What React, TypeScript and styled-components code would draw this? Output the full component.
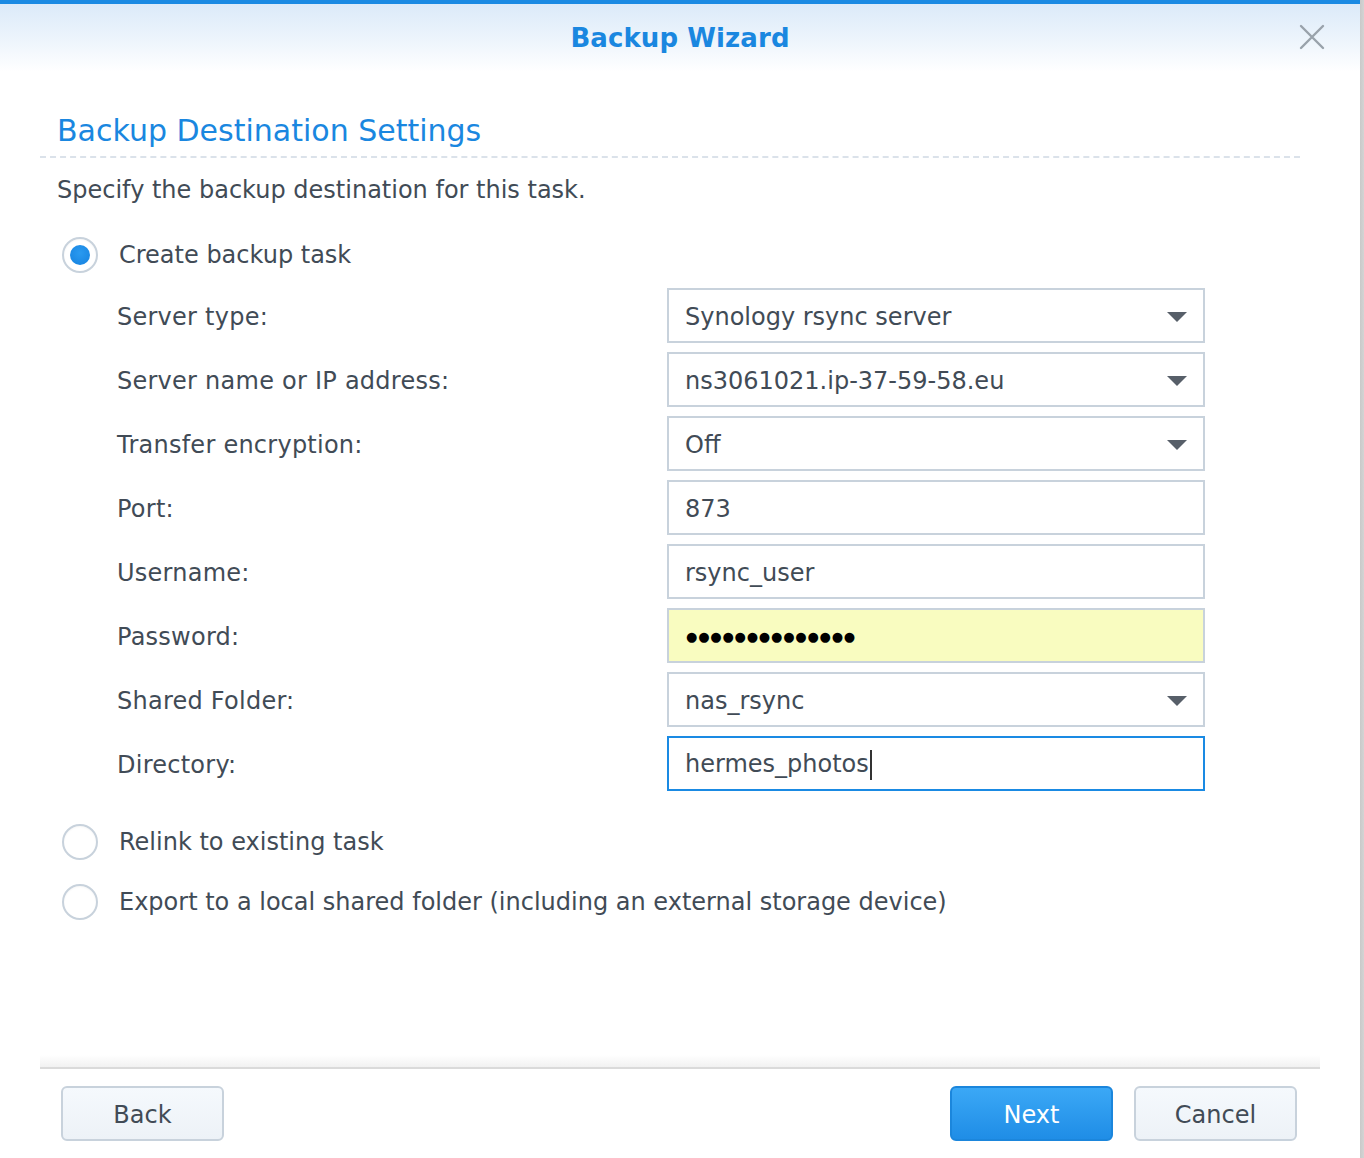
import React from "react";
import styled, { createGlobalStyle } from "styled-components";

const Global = createGlobalStyle`
  html, body { margin: 0; padding: 0; }
  body { background: #cfd0d2; font-family: "DejaVu Sans", Verdana, sans-serif; }
  * { box-sizing: border-box; }
`;

const Page = styled.div`
  display: flex;
  width: 1364px;
  height: 1158px;
  overflow: hidden;
`;

const Dialog = styled.div`
  width: 1360px;
  height: 1158px;
  background: #ffffff;
  display: flex;
  flex-direction: column;
`;

const EdgeStrip = styled.div`
  width: 4px;
  background: linear-gradient(to right, #c9c9c9, #d4d4d4);
`;

const Header = styled.header`
  border-top: 4px solid #1a8ae3;
  height: 72px;
  background: linear-gradient(to bottom, #dbeaf9 0%, #eef5fc 55%, #ffffff 100%);
  display: grid;
  grid-template-columns: 1fr auto 1fr;
  align-items: center;
`;

const HeaderTitle = styled.h1`
  grid-column: 2;
  margin: 0;
  font-size: 26px;
  font-weight: bold;
  color: #1a87e0;
  letter-spacing: 0.1px;
  padping-top: 0;
`;

const CloseButton = styled.button`
  grid-column: 3;
  justify-self: end;
  margin-right: 34px;
  margin-top: -2px;
  width: 28px;
  height: 28px;
  padding: 0;
  border: none;
  background: transparent;
  display: flex;
  align-items: center;
  justify-content: center;
`;

const Body = styled.main`
  flex: 1;
  padding: 0 60px 0 40px;
  display: flex;
  flex-direction: column;
`;

const SectionTitle = styled.h2`
  margin: 39px 0 0;
  padding: 2px 0 7px 17px;
  font-size: 30px;
  font-weight: normal;
  color: #1a87e0;
  border-bottom: 2px dashed #dbe2ea;
  line-height: 36px;
`;

const Description = styled.p`
  margin: 16px 0 0 17px;
  font-size: 24px;
  line-height: 32px;
  color: #414b56;
`;

const RadioRow = styled.label<{ $top: number }>`
  display: flex;
  align-items: center;
  gap: 21px;
  margin: ${(p) => p.$top}px 0 0 22px;
  font-size: 24px;
  line-height: 36px;
  color: #414b56;
`;

const RadioCircle = styled.span<{ $checked?: boolean }>`
  width: 36px;
  height: 36px;
  border-radius: 50%;
  border: 2px solid #c8d2dc;
  background: #ffffff;
  display: flex;
  align-items: center;
  justify-content: center;
  box-shadow: inset 0 1px 2px rgba(0, 0, 0, 0.04);
  &::after {
    content: "";
    display: ${(p) => (p.$checked ? "block" : "none")};
    width: 20px;
    height: 20px;
    border-radius: 50%;
    background: radial-gradient(circle at 50% 40%, #2a9af0, #1581df);
  }
`;

const Form = styled.div`
  margin: 15px 0 0 77px;
  display: flex;
  flex-direction: column;
  gap: 9px;
`;

const FormRow = styled.div`
  display: grid;
  grid-template-columns: 550px 538px;
  align-items: center;
`;

const Label = styled.span`
  font-size: 24px;
  color: #414b56;
  letter-spacing: 0.25px;
  padding-top: 3px;
`;

const Field = styled.div<{ $focused?: boolean; $filled?: boolean }>`
  height: 55px;
  border: 2px solid ${(p) => (p.$focused ? "#1a8ae3" : "#c8d2dc")};
  background: ${(p) => (p.$filled ? "#f9fcc0" : "#ffffff")};
  display: flex;
  align-items: center;
  padding: 2px 16px 0 16px;
  font-size: 24px;
  color: #414b56;
`;

const FieldText = styled.span`
  flex: 1;
  white-space: nowrap;
`;

const Caret = styled.span`
  display: inline-block;
  width: 2px;
  height: 30px;
  background: #333;
  vertical-align: middle;
  margin-left: 1px;
`;

const Dots = styled.span`
  flex: 1;
  font-size: 13px;
  letter-spacing: 0.8px;
  color: #000000;
  padding-left: 1px;
`;

const Footer = styled.footer`
  padding: 0 40px;
  display: flex;
  flex-direction: column;
`;

const FooterRule = styled.div`
  height: 14px;
  background: linear-gradient(to bottom, #ffffff, #f1f1f1);
  border-bottom: 2px solid #dadada;
`;

const ButtonBar = styled.div`
  display: flex;
  align-items: center;
  padding: 17px 23px 17px 21px;
  gap: 21px;
`;

const Spacer = styled.div`
  flex: 1;
`;

const Button = styled.button<{ $primary?: boolean }>`
  width: 163px;
  height: 55px;
  border-radius: 6px;
  font-family: "DejaVu Sans", Verdana, sans-serif;
  font-size: 24px;
  padding: 2px 0 0;
  border: 2px solid ${(p) => (p.$primary ? "#1b86dc" : "#c8d2dc")};
  background: ${(p) =>
    p.$primary
      ? "linear-gradient(to bottom, #3ba8f6, #1f8de6)"
      : "linear-gradient(to bottom, #f5f9fd, #edf2f7)"};
  color: ${(p) => (p.$primary ? "#ffffff" : "#414b56")};
`;

const ArrowIcon = () => (
  <svg width="20" height="10" viewBox="0 0 20 10">
    <path d="M0 0 L20 0 L10 10 Z" fill="#575f69" />
  </svg>
);

const CloseIcon = () => (
  <svg width="26" height="26" viewBox="0 0 26 26">
    <path d="M2 2 L24 24 M24 2 L2 24" stroke="#99a2ab" strokeWidth="2.4" strokeLinecap="round" />
  </svg>
);

type Row = {
  label: string;
  value?: string;
  select?: boolean;
  password?: boolean;
  focused?: boolean;
};

const rows: Row[] = [
  { label: "Server type:", value: "Synology rsync server", select: true },
  { label: "Server name or IP address:", value: "ns3061021.ip-37-59-58.eu", select: true },
  { label: "Transfer encryption:", value: "Off", select: true },
  { label: "Port:", value: "873" },
  { label: "Username:", value: "rsync_user" },
  { label: "Password:", password: true },
  { label: "Shared Folder:", value: "nas_rsync", select: true },
  { label: "Directory:", value: "hermes_photos", focused: true },
];

export default function App() {
  return (
    <>
      <Global />
      <Page>
        <Dialog>
          <Header>
            <HeaderTitle>Backup Wizard</HeaderTitle>
            <CloseButton aria-label="Close">
              <CloseIcon />
            </CloseButton>
          </Header>
          <Body>
            <SectionTitle>Backup Destination Settings</SectionTitle>
            <Description>Specify the backup destination for this task.</Description>
            <RadioRow $top={31}>
              <RadioCircle $checked />
              Create backup task
            </RadioRow>
            <Form>
              {rows.map((r) => (
                <FormRow key={r.label}>
                  <Label>{r.label}</Label>
                  <Field $focused={r.focused} $filled={r.password}>
                    {r.password ? (
                      <Dots>{"●".repeat(14)}</Dots>
                    ) : (
                      <FieldText>
                        {r.value}
                        {r.focused && <Caret />}
                      </FieldText>
                    )}
                    {r.select && <ArrowIcon />}
                  </Field>
                </FormRow>
              ))}
            </Form>
            <RadioRow $top={33}>
              <RadioCircle />
              Relink to existing task
            </RadioRow>
            <RadioRow $top={24}>
              <RadioCircle />
              Export to a local shared folder (including an external storage device)
            </RadioRow>
          </Body>
          <Footer>
            <FooterRule />
            <ButtonBar>
              <Button>Back</Button>
              <Spacer />
              <Button $primary>Next</Button>
              <Button>Cancel</Button>
            </ButtonBar>
          </Footer>
        </Dialog>
        <EdgeStrip />
      </Page>
    </>
  );
}
